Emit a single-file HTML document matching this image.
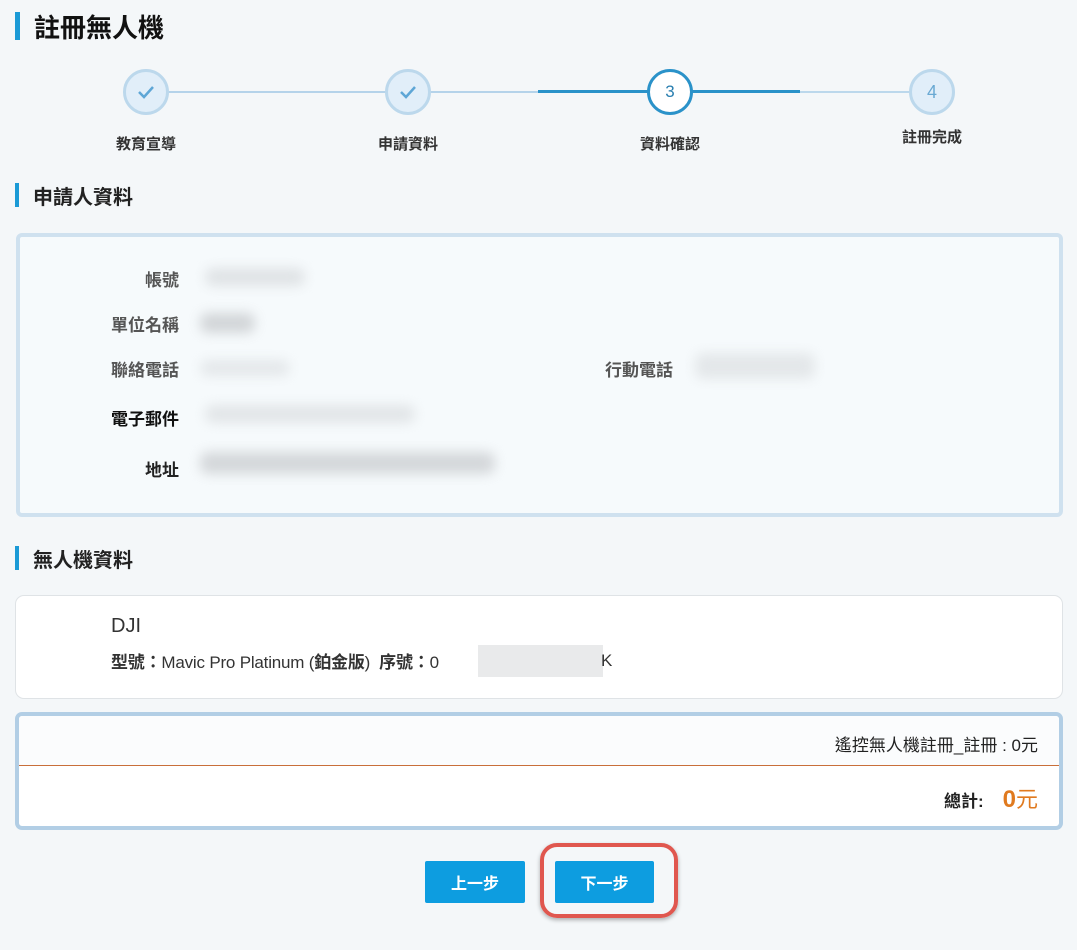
<!DOCTYPE html>
<html><head><meta charset="utf-8"><style>
*{box-sizing:border-box;margin:0;padding:0}
body{width:1077px;height:950px;background:#f4f7f9;font-family:"Liberation Sans","Noto Sans CJK TC",sans-serif;color:#222;position:relative;overflow:hidden}
.a{position:absolute}
.bar{position:absolute;background:#1b9ad6}
.t{position:absolute;white-space:nowrap}
.circ{position:absolute;width:46px;height:46px;border-radius:50%;border:3px solid #bcd8ec;background:#e1eef9;display:flex;align-items:center;justify-content:center;color:#6aa9d3;font-size:18px}
.lbl{position:absolute;font-size:15px;font-weight:bold;color:#333;width:120px;text-align:center}
.k{position:absolute;right:898px;font-size:17px;font-weight:bold;color:#555;white-space:nowrap}
.blur{position:absolute;background:#c9cccf;filter:blur(6px);border-radius:8px}
.btn{position:absolute;background:#0d9de0;color:#fff;font-weight:bold;font-size:16px;display:flex;align-items:center;justify-content:center;border-radius:2px}
</style></head><body>
<div class="bar" style="left:15px;top:12px;width:5px;height:28px"></div>
<div class="t" style="left:34px;top:8px;font-size:26px;font-weight:bold;color:#111">註冊無人機</div>

<div class="a" style="left:146px;top:91px;width:392px;height:2px;background:#b5d3ea"></div>
<div class="a" style="left:538px;top:90px;width:262px;height:3px;background:#2a92c9"></div>
<div class="a" style="left:800px;top:91px;width:132px;height:2px;background:#bcd8ec"></div>
<div class="circ" style="left:123px;top:69px"><svg width="18" height="14" viewBox="0 0 18 14"><path d="M2 7l5 5 9-10" fill="none" stroke="#5ea6d6" stroke-width="2.5"/></svg></div>
<div class="circ" style="left:385px;top:69px"><svg width="18" height="14" viewBox="0 0 18 14"><path d="M2 7l5 5 9-10" fill="none" stroke="#5ea6d6" stroke-width="2.5"/></svg></div>
<div class="circ" style="left:647px;top:69px;background:#fff;border-color:#2a92c9;color:#2a7fb0;font-size:17px">3</div>
<div class="circ" style="left:909px;top:69px">4</div>
<div class="lbl" style="left:86px;top:133px">教育宣導</div>
<div class="lbl" style="left:348px;top:133px">申請資料</div>
<div class="lbl" style="left:610px;top:133px">資料確認</div>
<div class="lbl" style="left:872px;top:126px">註冊完成</div>

<div class="bar" style="left:15px;top:183px;width:4px;height:24px"></div>
<div class="t" style="left:33px;top:181px;font-size:20px;font-weight:bold;color:#222">申請人資料</div>

<div class="a" style="left:16px;top:233px;width:1047px;height:284px;border:4px solid #cfe1ef;border-radius:6px;background:#f6fafc"></div>
<div class="k" style="top:266px">帳號</div>
<div class="k" style="top:311px">單位名稱</div>
<div class="k" style="top:356px">聯絡電話</div>
<div class="k" style="top:405px;color:#111">電子郵件</div>
<div class="k" style="top:456px;color:#222">地址</div>
<div class="t" style="left:605px;top:356px;font-size:17px;font-weight:bold;color:#555">行動電話</div>
<div class="blur" style="left:205px;top:268px;width:100px;height:18px;opacity:.5"></div>
<div class="blur" style="left:200px;top:313px;width:55px;height:20px;opacity:.8"></div>
<div class="blur" style="left:200px;top:360px;width:90px;height:16px;opacity:.4"></div>
<div class="blur" style="left:205px;top:405px;width:210px;height:18px;opacity:.45"></div>
<div class="blur" style="left:200px;top:452px;width:295px;height:22px;opacity:.75"></div>
<div class="blur" style="left:695px;top:353px;width:120px;height:26px;opacity:.4"></div>

<div class="bar" style="left:15px;top:546px;width:4px;height:24px"></div>
<div class="t" style="left:33px;top:544px;font-size:20px;font-weight:bold;color:#222">無人機資料</div>

<div class="a" style="left:15px;top:595px;width:1048px;height:104px;border:1px solid #dfe3e6;border-radius:9px;background:#fff"></div>
<div class="t" style="left:111px;top:615px;font-size:20px;color:#333">DJI</div>
<div class="t" style="left:111px;top:648px;font-size:17px;color:#333;letter-spacing:-0.2px"><b>型號：</b>Mavic Pro Platinum (<b>鉑金版</b>) &nbsp;<b>序號：</b>0</div>
<div class="a" style="left:478px;top:645px;width:125px;height:32px;background:#e9eaeb"></div>
<div class="t" style="left:601px;top:651px;font-size:17px;color:#333">K</div>

<div class="a" style="left:15px;top:712px;width:1048px;height:118px;border:4px solid #b2cee5;border-radius:7px;background:#fff;overflow:hidden">
<div class="a" style="left:0;top:0;width:1040px;height:50px;background:#fbfcfd;border-bottom:1px solid #c96f3a"></div>
</div>
<div class="t" style="right:39px;top:731px;font-size:17px;color:#222">遙控無人機註冊_註冊 : 0元</div>
<div class="t" style="right:39px;top:782px;font-size:17px;color:#222"><b>總計:</b> &nbsp;&nbsp;&nbsp;<span style="color:#e07a1f;font-size:24px;font-weight:bold">0</span><span style="color:#e07a1f;font-size:22px">元</span></div>

<div class="btn" style="left:425px;top:861px;width:100px;height:42px">上一步</div>
<div class="btn" style="left:555px;top:861px;width:99px;height:42px">下一步</div>
<div class="a" style="left:540px;top:843px;width:138px;height:75px;border:4px solid #e0574f;border-radius:17px;box-shadow:0 2px 4px rgba(0,0,0,.3)"></div>
</body></html>
